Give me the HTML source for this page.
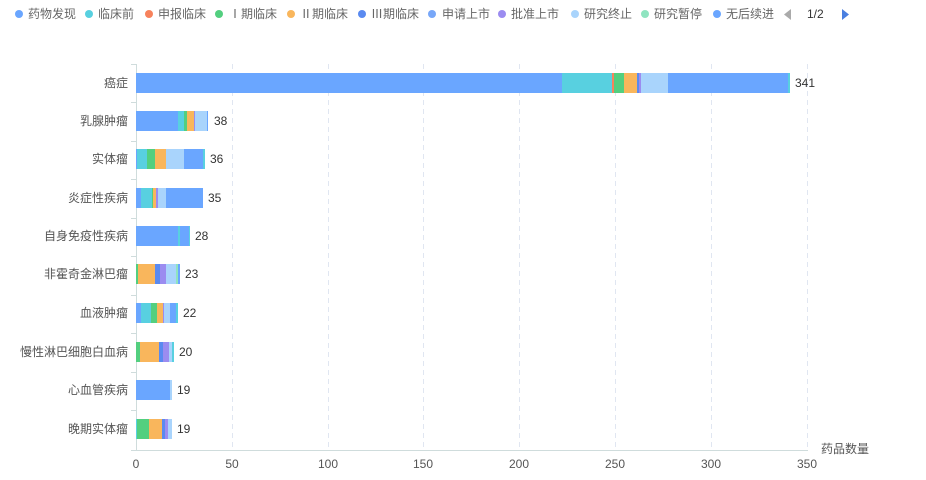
<!DOCTYPE html>
<html><head><meta charset="utf-8"><style>
html,body{margin:0;padding:0;background:#fff;width:926px;height:480px;overflow:hidden}
svg text{font-family:"Liberation Sans","Noto Sans CJK SC",sans-serif;}
</style></head><body>
<svg width="926" height="480" xmlns="http://www.w3.org/2000/svg">
<g font-size="12" fill="#666">
<circle cx="19" cy="14" r="4" fill="#6aa6ff"/><text x="28" y="18">药物发现</text>
<circle cx="89" cy="14" r="4" fill="#58d0e0"/><text x="98" y="18">临床前</text>
<circle cx="149" cy="14" r="4" fill="#f7825c"/><text x="158" y="18">申报临床</text>
<circle cx="219" cy="14" r="4" fill="#53cf7f"/><text x="229" y="18">Ⅰ期临床</text>
<circle cx="291" cy="14" r="4" fill="#f9b65c"/><text x="300" y="18">Ⅱ期临床</text>
<circle cx="362" cy="14" r="4" fill="#5a8af0"/><text x="371" y="18">Ⅲ期临床</text>
<circle cx="432" cy="14" r="4" fill="#78a7f8"/><text x="442" y="18">申请上市</text>
<circle cx="502" cy="14" r="4" fill="#9b8cf0"/><text x="511" y="18">批准上市</text>
<circle cx="575" cy="14" r="4" fill="#a9d4fc"/><text x="584" y="18">研究终止</text>
<circle cx="645" cy="14" r="4" fill="#8fe4c0"/><text x="654" y="18">研究暂停</text>
<circle cx="717" cy="14" r="4" fill="#6aa6ff"/><text x="726" y="18">无后续进</text>
<path d="M791 9 L791 20 L784 14.5 Z" fill="#aaa"/>
<text x="807" y="18" fill="#333">1/2</text>
<path d="M842 9 L842 20 L849 14.5 Z" fill="#4a7fe0"/>
</g>
<g stroke="#e0e6f1" stroke-dasharray="5,4" stroke-width="1">
<line x1="232.5" y1="64" x2="232.5" y2="450"/><line x1="328.5" y1="64" x2="328.5" y2="450"/>
<line x1="423.5" y1="64" x2="423.5" y2="450"/><line x1="519.5" y1="64" x2="519.5" y2="450"/>
<line x1="615.5" y1="64" x2="615.5" y2="450"/><line x1="711.5" y1="64" x2="711.5" y2="450"/>
<line x1="807.5" y1="64" x2="807.5" y2="450"/>
</g>
<g stroke="#cfdcdc" stroke-width="1">
<line x1="136.5" y1="64" x2="136.5" y2="450"/>
<line x1="136" y1="450.5" x2="808" y2="450.5"/>
<line x1="131" y1="64.5" x2="136" y2="64.5"/><line x1="131" y1="102.5" x2="136" y2="102.5"/>
<line x1="131" y1="141.5" x2="136" y2="141.5"/><line x1="131" y1="179.5" x2="136" y2="179.5"/>
<line x1="131" y1="218.5" x2="136" y2="218.5"/><line x1="131" y1="256.5" x2="136" y2="256.5"/>
<line x1="131" y1="295.5" x2="136" y2="295.5"/><line x1="131" y1="333.5" x2="136" y2="333.5"/>
<line x1="131" y1="372.5" x2="136" y2="372.5"/><line x1="131" y1="410.5" x2="136" y2="410.5"/>
<line x1="131" y1="450.5" x2="136" y2="450.5"/>
</g>
<g font-size="12" fill="#555" text-anchor="end">
<text x="128" y="87">癌症</text><text x="128" y="125">乳腺肿瘤</text><text x="128" y="163">实体瘤</text>
<text x="128" y="202">炎症性疾病</text><text x="128" y="240">自身免疫性疾病</text><text x="128" y="278">非霍奇金淋巴瘤</text>
<text x="128" y="317">血液肿瘤</text><text x="128" y="356">慢性淋巴细胞白血病</text><text x="128" y="394">心血管疾病</text>
<text x="128" y="433">晚期实体瘤</text>
</g>
<g font-size="12" fill="#555" text-anchor="middle">
<text x="136" y="468">0</text><text x="232" y="468">50</text><text x="328" y="468">100</text><text x="423" y="468">150</text>
<text x="519" y="468">200</text><text x="615" y="468">250</text><text x="711" y="468">300</text><text x="807" y="468">350</text>
</g>
<text x="821" y="453" font-size="12" fill="#555">药品数量</text>
<g>
<rect x="136" y="73" width="426" height="20" fill="#6aa6ff"/><rect x="562" y="73" width="50" height="20" fill="#58d0e0"/>
<rect x="612" y="73" width="2" height="20" fill="#f7825c"/><rect x="614" y="73" width="10" height="20" fill="#53cf7f"/>
<rect x="624" y="73" width="13" height="20" fill="#f9b65c"/><rect x="637" y="73" width="2" height="20" fill="#5a8af0"/>
<rect x="639" y="73" width="2" height="20" fill="#9b8cf0"/><rect x="641" y="73" width="27" height="20" fill="#a9d4fc"/>
<rect x="668" y="73" width="120" height="20" fill="#6aa6ff"/><rect x="788" y="73" width="2" height="20" fill="#58d0e0"/>
<rect x="136" y="111" width="42" height="20" fill="#6aa6ff"/><rect x="178" y="111" width="6" height="20" fill="#58d0e0"/>
<rect x="184" y="111" width="3" height="20" fill="#53cf7f"/><rect x="187" y="111" width="7" height="20" fill="#f9b65c"/>
<rect x="194" y="111" width="1" height="20" fill="#9b8cf0"/><rect x="195" y="111" width="12" height="20" fill="#a9d4fc"/>
<rect x="207" y="111" width="1" height="20" fill="#6aa6ff"/>
<rect x="136" y="149" width="1" height="20" fill="#6aa6ff"/><rect x="137" y="149" width="10" height="20" fill="#58d0e0"/>
<rect x="147" y="149" width="8" height="20" fill="#53cf7f"/><rect x="155" y="149" width="11" height="20" fill="#f9b65c"/>
<rect x="166" y="149" width="18" height="20" fill="#a9d4fc"/><rect x="184" y="149" width="19" height="20" fill="#6aa6ff"/>
<rect x="203" y="149" width="2" height="20" fill="#58d0e0"/>
<rect x="136" y="188" width="5" height="20" fill="#6aa6ff"/><rect x="141" y="188" width="11" height="20" fill="#58d0e0"/>
<rect x="152" y="188" width="1" height="20" fill="#53cf7f"/><rect x="153" y="188" width="3" height="20" fill="#f9b65c"/>
<rect x="156" y="188" width="2" height="20" fill="#9b8cf0"/><rect x="158" y="188" width="8" height="20" fill="#a9d4fc"/>
<rect x="166" y="188" width="37" height="20" fill="#6aa6ff"/>
<rect x="136" y="226" width="42" height="20" fill="#6aa6ff"/><rect x="178" y="226" width="2" height="20" fill="#58d0e0"/>
<rect x="180" y="226" width="9" height="20" fill="#6aa6ff"/><rect x="189" y="226" width="1" height="20" fill="#58d0e0"/>
<rect x="136" y="264" width="2" height="20" fill="#53cf7f"/><rect x="138" y="264" width="17" height="20" fill="#f9b65c"/>
<rect x="155" y="264" width="5" height="20" fill="#5a8af0"/><rect x="160" y="264" width="6" height="20" fill="#9b8cf0"/>
<rect x="166" y="264" width="10" height="20" fill="#a9d4fc"/><rect x="176" y="264" width="2" height="20" fill="#8fe4c0"/>
<rect x="178" y="264" width="2" height="20" fill="#6aa6ff"/>
<rect x="136" y="303" width="5" height="20" fill="#6aa6ff"/><rect x="141" y="303" width="10" height="20" fill="#58d0e0"/>
<rect x="151" y="303" width="6" height="20" fill="#53cf7f"/><rect x="157" y="303" width="6" height="20" fill="#f9b65c"/>
<rect x="163" y="303" width="1" height="20" fill="#9b8cf0"/><rect x="164" y="303" width="6" height="20" fill="#a9d4fc"/>
<rect x="170" y="303" width="6" height="20" fill="#6aa6ff"/><rect x="176" y="303" width="2" height="20" fill="#58d0e0"/>
<rect x="136" y="342" width="4" height="20" fill="#53cf7f"/><rect x="140" y="342" width="19" height="20" fill="#f9b65c"/>
<rect x="159" y="342" width="4" height="20" fill="#5a8af0"/><rect x="163" y="342" width="6" height="20" fill="#9b8cf0"/>
<rect x="169" y="342" width="3" height="20" fill="#a9d4fc"/><rect x="172" y="342" width="2" height="20" fill="#58d0e0"/>
<rect x="136" y="380" width="34" height="20" fill="#6aa6ff"/><rect x="170" y="380" width="2" height="20" fill="#a9d4fc"/>
<rect x="136" y="419" width="1" height="20" fill="#58d0e0"/><rect x="137" y="419" width="12" height="20" fill="#53cf7f"/>
<rect x="149" y="419" width="13" height="20" fill="#f9b65c"/><rect x="162" y="419" width="3" height="20" fill="#5a8af0"/>
<rect x="165" y="419" width="3" height="20" fill="#9b8cf0"/><rect x="168" y="419" width="4" height="20" fill="#a9d4fc"/>
</g>
<g font-size="12" fill="#333">
<text x="795" y="87">341</text><text x="214" y="125">38</text><text x="210" y="163">36</text>
<text x="208" y="202">35</text><text x="195" y="240">28</text><text x="185" y="278">23</text>
<text x="183" y="317">22</text><text x="179" y="356">20</text><text x="177" y="394">19</text><text x="177" y="433">19</text>
</g>
</svg>
</body></html>
